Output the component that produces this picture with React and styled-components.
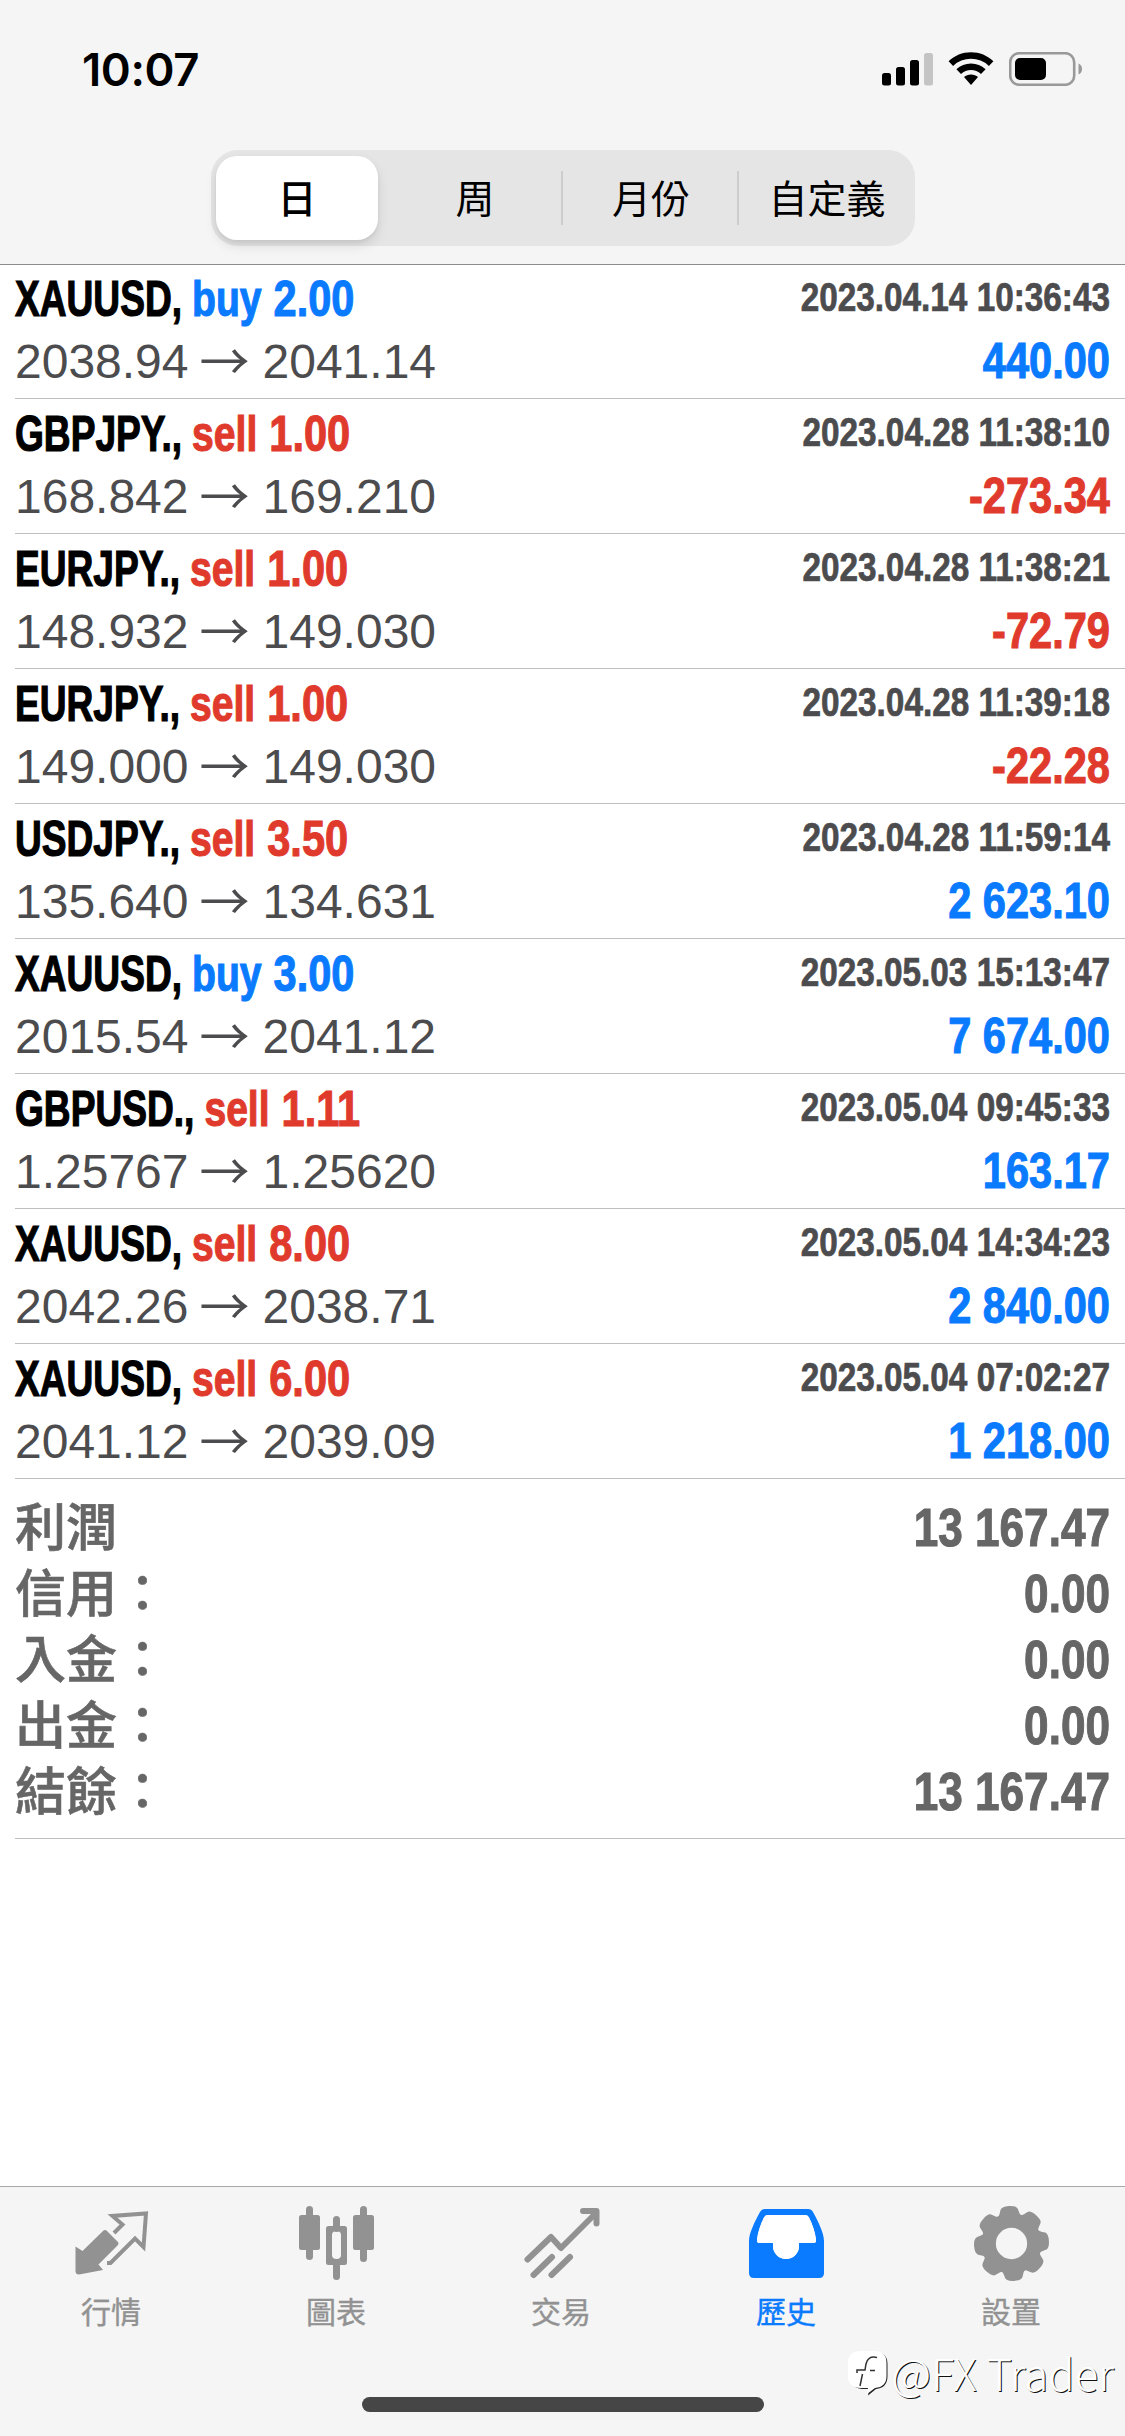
import React from 'react';
import styled, { createGlobalStyle } from 'styled-components';

const Global = createGlobalStyle`
  body { margin: 0; background: #fff; }
  * { box-sizing: border-box; }
`;

const cjk = '"Liberation Sans", "Noto Sans CJK TC", sans-serif';
const blue = '#0a7aff';
const red = '#e03a2d';

const Screen = styled.div`
  width: 1125px;
  height: 2436px;
  display: flex;
  flex-direction: column;
  background: #fff;
  overflow: hidden;
  font-family: ${cjk};
`;

const Header = styled.header`
  flex: none;
  height: 265px;
  background: #f5f5f5;
  border-bottom: 1px solid #8c8c8c;
`;

const StatusBar = styled.div`
  height: 150px;
  padding: 0 42px 12px 82px;
  display: flex;
  align-items: center;
  justify-content: space-between;
`;

const Clock = styled.span`
  padding-top: 1px;
  font: 560 45.5px/46px Inter, sans-serif;
  letter-spacing: -0.4px;
`;

const StatusIcons = styled.div`
  display: flex;
  align-items: center;
  gap: 15px;
`;

const Segments = styled.div`
  width: 704px;
  height: 96px;
  margin-left: 211px;
  border-radius: 27px;
  background: #e5e5e6;
  display: grid;
  grid-template-columns: repeat(4, 176px);
  align-items: center;
`;

const Segment = styled.button`
  border: 0;
  background: none;
  padding: 0;
  height: 54px;
  margin-left: -2px;
  color: #000;
  font: 400 39px/50px "Noto Sans CJK TC", sans-serif;
  border-left: 2px solid ${(p) => (p.$divided ? '#cdcdcf' : 'transparent')};
  padding-bottom: 4px;
  ${(p) => p.$active && `
    height: 84px;
    margin: 0 9px 0 5px;
    border: 0;
    border-radius: 21px;
    background: #fff;
    font-weight: 500;
    box-shadow: 0 6px 12px rgba(0, 0, 0, 0.1), 0 2px 4px rgba(0, 0, 0, 0.06);
  `}
`;

const List = styled.main`
  flex: 1;
  display: flex;
  flex-direction: column;
`;

const DealRow = styled.article`
  height: ${(p) => (p.$first ? 134 : 135)}px;
  margin-left: 15px;
  padding: ${(p) => (p.$first ? 16 : 17)}px 15px 0 0;
  border-bottom: 1px solid #bfbfbf;
`;

const Line = styled.div`
  display: flex;
  justify-content: space-between;
  align-items: ${(p) => p.$align};
  height: 52px;
`;

const Group = styled.div`
  display: flex;
  align-items: baseline;
`;

/* Narrow face: the font size carries the width, the vertical stretch from the baseline the height. */
const Narrow = styled.span`
  display: inline-block;
  white-space: pre;
  font-weight: 700;
  line-height: 1;
  font-size: ${(p) => p.$size * p.$ratio}px;
  color: ${(p) => p.$color};
  transform: scaleY(${(p) => 1 / p.$ratio});
  transform-origin: 0 84.65%;
  -webkit-text-stroke: 0.9px ${(p) => p.$color};
  margin-left: ${(p) => p.$gap || 0}px;
`;

const Time = styled(Narrow)`
  margin-top: 2px;
  -webkit-text-stroke-width: 0.6px;
`;

const Price = styled.span`
  font-size: 48px;
  line-height: 46px;
  color: #4c4c4e;
`;

const Arrow = styled.span`
  font: 400 50px/46px "Noto Sans CJK TC", sans-serif;
  color: #4c4c4e;
  margin: 0 13px 0 11px;
  transform: translateY(1.5px);
`;

const Summary = styled.section`
  height: 360px;
  margin-left: 15px;
  padding: 12px 15px 0 0;
  border-bottom: 1px solid #bfbfbf;
`;

const SummaryRow = styled.div`
  height: 66px;
  display: flex;
  justify-content: space-between;
  align-items: baseline;
`;

const SummaryLabel = styled.span`
  font: 500 51px/66px "Noto Sans CJK TC", sans-serif;
  color: #666;
  -webkit-text-stroke: 0.6px #666;
`;

const TabBar = styled.nav`
  flex: none;
  position: relative;
  height: 250px;
  background: #f5f5f5;
  border-top: 1px solid #a8a8a8;
  display: grid;
  grid-template-columns: repeat(5, 225px);
`;

const Tab = styled.a`
  display: flex;
  flex-direction: column;
  align-items: center;
  padding: 18px 2px 0 0;
  color: ${(p) => (p.$active ? '#0a7aff' : '#929292')};
`;

const TabLabel = styled.span`
  margin: 5px 1px 0 0;
  font: 400 30px/44px "Noto Sans CJK TC", sans-serif;
  -webkit-text-stroke: 0.4px currentColor;
`;

const HomeIndicator = styled.div`
  position: absolute;
  left: 362px;
  bottom: 24px;
  width: 402px;
  height: 15px;
  border-radius: 8px;
  background: #464646;
`;

const Watermark = styled.div`
  position: absolute;
  right: 11px;
  bottom: 37px;
  display: flex;
  align-items: center;
  gap: 2px;
  color: #fff;
  font: 300 43.5px/52px "Noto Sans CJK TC", sans-serif;
  letter-spacing: 0.1px;
  text-shadow: 1px 1px 0.5px #111;
`;

const Signal = () => (
  <svg width="51" height="34" viewBox="0 0 51 34">
    <rect x="0" y="21" width="9" height="12.5" rx="2.5" />
    <rect x="14" y="15" width="9" height="18.5" rx="2.5" />
    <rect x="28" y="8" width="9" height="25.5" rx="2.5" />
    <rect x="42" y="1" width="9" height="32.5" rx="2.5" fill="#c4c4c4" />
  </svg>
);

const Wifi = () => (
  <svg width="46" height="34" viewBox="0 0 46 34">
    <path d="M23 0.3C31.5 0.3 39.6 3.6 45.4 9.3L40.9 13.9A26 26 0 0 0 5.1 13.9L0.6 9.3C6.4 3.6 14.5 .3 23 .3Z" />
    <path d="M23 11.4C28.6 11.4 33.5 13.5 37.6 17.2L33 21.9A14.8 14.8 0 0 0 13 21.9L8.4 17.2C12.5 13.5 17.4 11.4 23 11.4Z" />
    <path d="M23 22.5C25.8 22.5 28.2 23.5 30 25.1L23 33L16 25.1C17.8 23.5 20.2 22.5 23 22.5Z" />
  </svg>
);

const Battery = () => (
  <svg width="74" height="34" viewBox="0 0 74 34">
    <rect x="1.2" y="1.2" width="64" height="31.6" rx="9" fill="none" stroke="#999" strokeWidth="2.6" />
    <rect x="6" y="6" width="31" height="22" rx="5" />
    <path d="M69.500 11.500C72 12.500 73 14.500 73 17C73 19.500 72 21.500 69.500 22.500Z" fill="#999" />
  </svg>
);

const QuotesIcon = () => (
  <svg width="75" height="78" viewBox="0 0 75 78">
    <path d="M1.500 41.500L8.500 46L29 26Q31 24 33 26L43.500 36.500Q45.500 38.500 43.500 40.500L24.500 59.500L29 65L5 69.500Q1.500 69.500 1.500 66Z" fill="currentColor" />
    <path d="M40 28L48.500 19.500L38.500 11L72 8.500L69.500 42L61 33.500L36.500 58L33 58" fill="none" stroke="currentColor" strokeWidth="4" />
  </svg>
);

const ChartIcon = () => (
  <svg width="75" height="78" viewBox="0 0 75 78">
    <g fill="currentColor">
      <rect x="0" y="10" width="21" height="35" rx="2.500" />
      <rect x="7" y="1" width="7" height="54" rx="3.500" />
      <rect x="54" y="10" width="21" height="35" rx="2.500" />
      <rect x="61" y="1" width="7" height="56" rx="3.500" />
      <rect x="34" y="11" width="7" height="16" rx="3.500" />
      <rect x="34" y="56" width="7" height="19" rx="3.500" />
    </g>
    <path fillRule="evenodd" fill="currentColor" d="M29.500 21H45.500Q48 21 48 23.500V57.500Q48 60 45.500 60H29.500Q27 60 27 57.500V23.500Q27 21 29.500 21ZM37.500 26Q33 26 33 30V50Q33 54 37.500 54Q42 54 42 50V30Q42 26 37.500 26Z" />
  </svg>
);

const TradeIcon = () => (
  <svg width="76" height="78" viewBox="0 0 76 78" fill="none" stroke="currentColor" strokeWidth="6">
    <path d="M3.500 54.500L27 32L37 43L72 8" strokeLinecap="round" strokeLinejoin="round" />
    <path d="M59 6H72.500V18.500" strokeLinecap="round" strokeLinejoin="round" />
    <path d="M9.500 70L28 52M27.500 70L46 52" strokeLinecap="round" />
  </svg>
);

const HistoryIcon = () => (
  <svg width="75" height="78" viewBox="0 0 75 78">
    <path fillRule="evenodd" fill="currentColor" d="M16 4H59Q62.500 4 64 7C69 16 75 28 75 36V68Q75 73 70 73H5Q0 73 0 68V36C0 28 6 16 11 7Q12.500 4 16 4ZM18.500 10Q16 10 15 12.500C11.500 19 9 27 8 34.500Q7.700 38 10 38H24V41A13 13 0 0 0 50 41V38H65Q67.300 38 67 34.500C66 27 63.500 19 60 12.500Q59 10 56.500 10Z" />
    <path fill="#fff" d="M18.500 10Q16 10 15 12.500C11.500 19 9 27 8 34.500Q7.700 38 10 38H24V41A13 13 0 0 0 50 41V38H65Q67.300 38 67 34.500C66 27 63.500 19 60 12.500Q59 10 56.500 10Z" />
  </svg>
);

const tooth = (i) => (
  <path key={i} transform={`rotate(${i * 45 - 4} 37.500 38.500)`} d="M23 13C28 11 27.500 7.500 29 4Q30.500 1 37.500 1Q44.500 1 46 4C47.500 7.500 47 11 52 13Z" />
);

const SettingsIcon = () => (
  <svg width="75" height="78" viewBox="0 0 75 78" fill="currentColor">
    <circle cx="37.500" cy="38.500" r="22.900" fill="none" stroke="currentColor" strokeWidth="14.500" />
    {[0, 1, 2, 3, 4, 5, 6, 7].map(tooth)}
  </svg>
);

const WatermarkLogo = () => (
  <svg width="41" height="46" viewBox="0 0 41 46">
    <path d="M26 2Q39.500 2 39.500 14V26Q39.500 38 28 39L20 45.500L21 39H14Q6 38 3 33Z" fill="#222" />
    <path d="M13 1H26Q38.500 1 38.500 13V26Q38.500 37 27 38L19 44L20 38H13Q0 38 0 26V13Q0 1 13 1Z" fill="#fff" />
    <path d="M29 7.500C22 6 19 9 18 14L17 20H9V23M14.500 24L12 36M22 20.500H27" fill="none" stroke="#333" strokeWidth="1.500" />
  </svg>
);

const deals = [
  ['XAUUSD,', 'buy', '2.00', '2038.94', '2041.14', '2023.04.14 10:36:43', '440.00'],
  ['GBPJPY.,', 'sell', '1.00', '168.842', '169.210', '2023.04.28 11:38:10', '-273.34'],
  ['EURJPY.,', 'sell', '1.00', '148.932', '149.030', '2023.04.28 11:38:21', '-72.79'],
  ['EURJPY.,', 'sell', '1.00', '149.000', '149.030', '2023.04.28 11:39:18', '-22.28'],
  ['USDJPY.,', 'sell', '3.50', '135.640', '134.631', '2023.04.28 11:59:14', '2 623.10'],
  ['XAUUSD,', 'buy', '3.00', '2015.54', '2041.12', '2023.05.03 15:13:47', '7 674.00'],
  ['GBPUSD.,', 'sell', '1.11', '1.25767', '1.25620', '2023.05.04 09:45:33', '163.17'],
  ['XAUUSD,', 'sell', '8.00', '2042.26', '2038.71', '2023.05.04 14:34:23', '2 840.00'],
  ['XAUUSD,', 'sell', '6.00', '2041.12', '2039.09', '2023.05.04 07:02:27', '1 218.00'],
];

const totals = [
  ['利潤', '13 167.47'],
  ['信用：', '0.00'],
  ['入金：', '0.00'],
  ['出金：', '0.00'],
  ['結餘：', '13 167.47'],
];

const tabs = [
  ['行情', QuotesIcon],
  ['圖表', ChartIcon],
  ['交易', TradeIcon],
  ['歷史', HistoryIcon],
  ['設置', SettingsIcon],
];

function Deal({ deal, first }) {
  const [symbol, side, volume, open, close, time, profit] = deal;
  const sideColor = side === 'buy' ? blue : red;
  return (
    <DealRow $first={first}>
      <Line $align="flex-start">
        <Group>
          <Narrow $size={49.5} $ratio={0.75} $color="#000">{symbol}</Narrow>
          <Narrow $size={49.5} $ratio={0.79} $color={sideColor} $gap={10}>{side}</Narrow>
          <Narrow $size={49.5} $ratio={0.84} $color={sideColor} $gap={12}>{volume}</Narrow>
        </Group>
        <Time $size={40} $ratio={0.833} $color="#4c4c4e">{time}</Time>
      </Line>
      <Line $align="baseline">
        <Group>
          <Price>{open}</Price>
          <Arrow>→</Arrow>
          <Price>{close}</Price>
        </Group>
        <Narrow $size={49.5} $ratio={0.84} $color={profit[0] === '-' ? red : blue}>{profit}</Narrow>
      </Line>
    </DealRow>
  );
}

export default function App() {
  return (
    <Screen>
      <Global />
      <Header>
        <StatusBar>
          <Clock>10:07</Clock>
          <StatusIcons><Signal /><Wifi /><Battery /></StatusIcons>
        </StatusBar>
        <Segments>
          <Segment $active>日</Segment>
          <Segment>周</Segment>
          <Segment $divided>月份</Segment>
          <Segment $divided>自定義</Segment>
        </Segments>
      </Header>
      <List>
        {deals.map((deal, i) => <Deal key={i} deal={deal} first={i === 0} />)}
        <Summary>
          {totals.map(([label, value]) => (
            <SummaryRow key={label}>
              <SummaryLabel>{label}</SummaryLabel>
              <Narrow $size={53} $ratio={0.833} $color="#666">{value}</Narrow>
            </SummaryRow>
          ))}
        </Summary>
      </List>
      <TabBar>
        {tabs.map(([label, Icon]) => (
          <Tab key={label} $active={label === '歷史'}>
            <Icon />
            <TabLabel>{label}</TabLabel>
          </Tab>
        ))}
        <HomeIndicator />
        <Watermark><WatermarkLogo />@FX Trader</Watermark>
      </TabBar>
    </Screen>
  );
}
